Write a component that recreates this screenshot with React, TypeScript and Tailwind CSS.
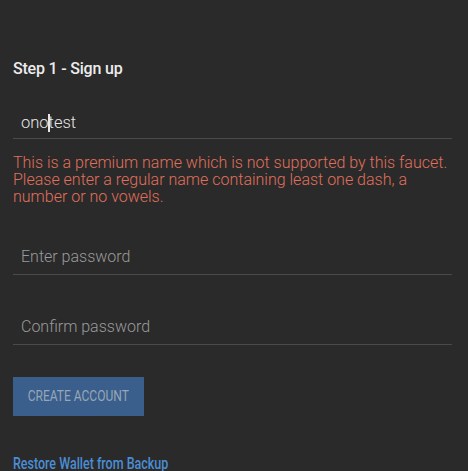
export default function App() {
  return (
    <div className="min-h-[471px] bg-[#2a2a2a] px-[13px] pr-[16px] pt-[59px] font-['Roboto',sans-serif]">
      <h2 className="text-[16px] font-medium leading-[20px] tracking-[-0.2px] text-[#ececec]">Step 1 - Sign up</h2>

      {/* account name */}
      <div className="mt-[29px] flex h-[31px] items-center border-b border-[#4a4a4a] pl-[8px] text-[16.5px] font-light text-[#e6e6e6]">
        <span>ono</span>
        <span className="mx-[-1px] h-[18px] w-[2px] bg-[#e6e6e6]" />
        <span>test</span>
      </div>

      <p className="mt-[15px] text-[16px] font-light leading-[17px] text-[#e0705c]">
        This is a premium name which is not supported by this faucet. Please enter a regular name containing least one dash, a
        number or no vowels.
      </p>

      <div className="mt-[35px] flex h-[35px] items-center border-b border-[#4a4a4a] pl-[8px] text-[16px] font-light text-[#9a9a9a]">
        Enter password
      </div>
      <div className="mt-[35px] flex h-[35px] items-center border-b border-[#4a4a4a] pl-[8px] text-[16px] font-light text-[#9a9a9a]">
        Confirm password
      </div>

      <button className="mt-[32px] flex h-[39px] w-[131px] items-center justify-center bg-[#3a5f8c] text-[15.5px] text-[#98a6b6]">
        <span className="inline-block scale-x-[0.775] whitespace-nowrap">CREATE ACCOUNT</span>
      </button>

      <a className="mt-[38px] block origin-left scale-x-[0.78] whitespace-nowrap text-[16px] font-medium leading-[20px] text-[#4a8ed6]">
        Restore Wallet from Backup
      </a>
    </div>
  )
}
